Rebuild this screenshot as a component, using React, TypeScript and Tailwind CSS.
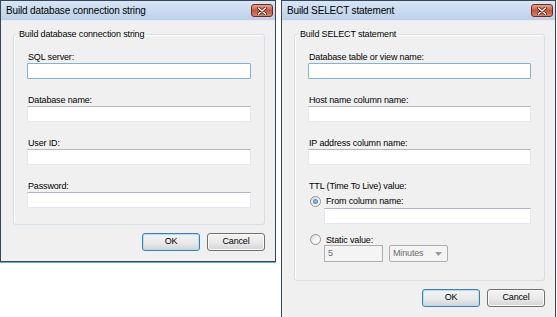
import React from "react";

function CloseButton() {
  return (
    <div className="flex h-[13px] w-[22px] items-center justify-center rounded-[3px] border border-[#6e2a1f] bg-linear-to-b from-[#e8a592] via-[#c8553d] to-[#d98468]">
      <svg width="10" height="8" viewBox="0 0 10 8">
        <path d="M1.5 1 L8.5 7 M8.5 1 L1.5 7" stroke="#5a1d12" strokeWidth="3" strokeLinecap="round" />
        <path d="M1.5 1 L8.5 7 M8.5 1 L1.5 7" stroke="#ffffff" strokeWidth="1.6" strokeLinecap="round" />
      </svg>
    </div>
  );
}

function TextBox({ focused = false, className = "" }: { focused?: boolean; className?: string }) {
  return (
    <div
      className={
        focused
          ? `h-[16px] rounded-[1px] border border-[#7fb3dc] bg-white ${className}`
          : `h-[16px] border border-[#e3e9ef] border-t-[#b4b7bd] bg-white ${className}`
      }
    />
  );
}

function Field({ label, focused = false, first = false }: { label: string; focused?: boolean; first?: boolean }) {
  return (
    <div className={first ? "flex flex-col" : "mt-[15px] flex flex-col"}>
      <span className="ml-[1px] h-[12px] leading-[12px]">{label}</span>
      <TextBox focused={focused} />
    </div>
  );
}

function Radio({ checked = false }: { checked?: boolean }) {
  return (
    <span className="flex size-[11px] shrink-0 items-center justify-center rounded-full border border-[#929292] bg-linear-to-br from-[#d4d4d4] via-[#f4f4f4] to-[#ffffff]">
      {checked && (
        <span className="size-[5px] rounded-full bg-radial from-[#9cd0f5] to-[#1f5fae]" />
      )}
    </span>
  );
}

function DialogButton({ label, primary = false }: { label: string; primary?: boolean }) {
  return (
    <div
      className={
        primary
          ? "flex h-[18px] w-[58px] items-center justify-center rounded-[3px] border border-[#3c7fb1] bg-linear-to-b from-[#f2f2f2] via-[#ebebeb] to-[#d4d4d4] shadow-[inset_0_0_0_1px_#aee0f7]"
          : "flex h-[18px] w-[58px] items-center justify-center rounded-[3px] border border-[#707070] bg-linear-to-b from-[#f2f2f2] via-[#ebebeb] to-[#d4d4d4] shadow-[inset_0_0_0_1px_#fbfbfb]"
      }
    >
      {label}
    </div>
  );
}

function Dialog({
  title,
  width,
  children,
}: {
  title: string;
  width: string;
  children: React.ReactNode;
}) {
  return (
    <div className={`flex flex-col border border-[#37475a] bg-[#f0f0f0] shadow-[0_1px_0_#5bb5cd] ${width}`}>
      {/* barra de título */}
      <div className="flex h-[20px] items-center justify-between border-b border-[#e3ebf5] bg-linear-to-b from-[#d8e5f4] to-[#bcd1ea] pl-[5px] pr-[2px]">
        <span className="text-[10px] tracking-[-0.15px] text-black">{title}</span>
        <CloseButton />
      </div>
      {children}
      <div className="mt-[8px] flex justify-end gap-[7px] pr-[10px] pb-[10px]">
        <DialogButton label="OK" primary />
        <DialogButton label="Cancel" />
      </div>
    </div>
  );
}

function GroupBox({ legend, children, className = "" }: { legend: string; children: React.ReactNode; className?: string }) {
  return (
    <fieldset className={`rounded-[3px] border border-[#d5dfe5] px-[13px] shadow-[inset_1px_1px_0_#ffffff] ${className}`}>
      <legend className="-ml-[10px] px-[2px] leading-[12px]">{legend}</legend>
      {children}
    </fieldset>
  );
}

export default function App() {
  return (
    <div className="flex h-[317px] w-[557px] items-start gap-[5px] bg-white font-['Liberation_Sans',Arial,sans-serif] text-[9px] tracking-[-0.15px] text-black">
      {/* Ventana izquierda */}
      <Dialog title="Build database connection string" width="w-[276px]">
        <div className="pl-[12px] pr-[10px] pt-[7px]">
          <GroupBox legend="Build database connection string" className="pt-[11px] pb-[16px]">
            <Field label="SQL server:" focused first />
            <Field label="Database name:" />
            <Field label="User ID:" />
            <Field label="Password:" />
          </GroupBox>
        </div>
      </Dialog>

      {/* Ventana derecha */}
      <Dialog title="Build SELECT statement" width="w-[275px]">
        <div className="pl-[12px] pr-[10px] pt-[7px]">
          <GroupBox legend="Build SELECT statement" className="pt-[11px] pb-[18px]">
            <Field label="Database table or view name:" focused first />
            <Field label="Host name column name:" />
            <Field label="IP address column name:" />
            <div className="mt-[15px] flex flex-col">
              <span className="ml-[1px] h-[12px] leading-[12px]">TTL (Time To Live) value:</span>
              <div className="mt-[3px] flex h-[12px] items-center gap-[5px] pl-[2px]">
                <Radio checked />
                <span className="leading-[12px]">From column name:</span>
              </div>
              <TextBox className="ml-[16px] mt-[1px]" />
              <div className="mt-[10px] flex h-[11px] items-center gap-[5px] pl-[2px]">
                <Radio />
                <span className="leading-[12px]">Static value:</span>
              </div>
              <div className="ml-[16px] flex gap-[6px]">
                <div className="flex h-[17px] w-[59px] items-center border border-[#afafaf] bg-[#f4f4f4] pl-[3px] text-[#6d6d6d]">
                  5
                </div>
                <div className="flex h-[17px] w-[59px] items-center justify-between rounded-[2px] border border-[#afafaf] bg-[#f4f4f4] pl-[3px] pr-[5px] text-[#6d6d6d]">
                  <span>Minutes</span>
                  <svg width="7" height="4" viewBox="0 0 7 4">
                    <path d="M0 0 H7 L3.5 4 Z" fill="#9a9a9a" />
                  </svg>
                </div>
              </div>
            </div>
          </GroupBox>
        </div>
      </Dialog>
    </div>
  );
}
